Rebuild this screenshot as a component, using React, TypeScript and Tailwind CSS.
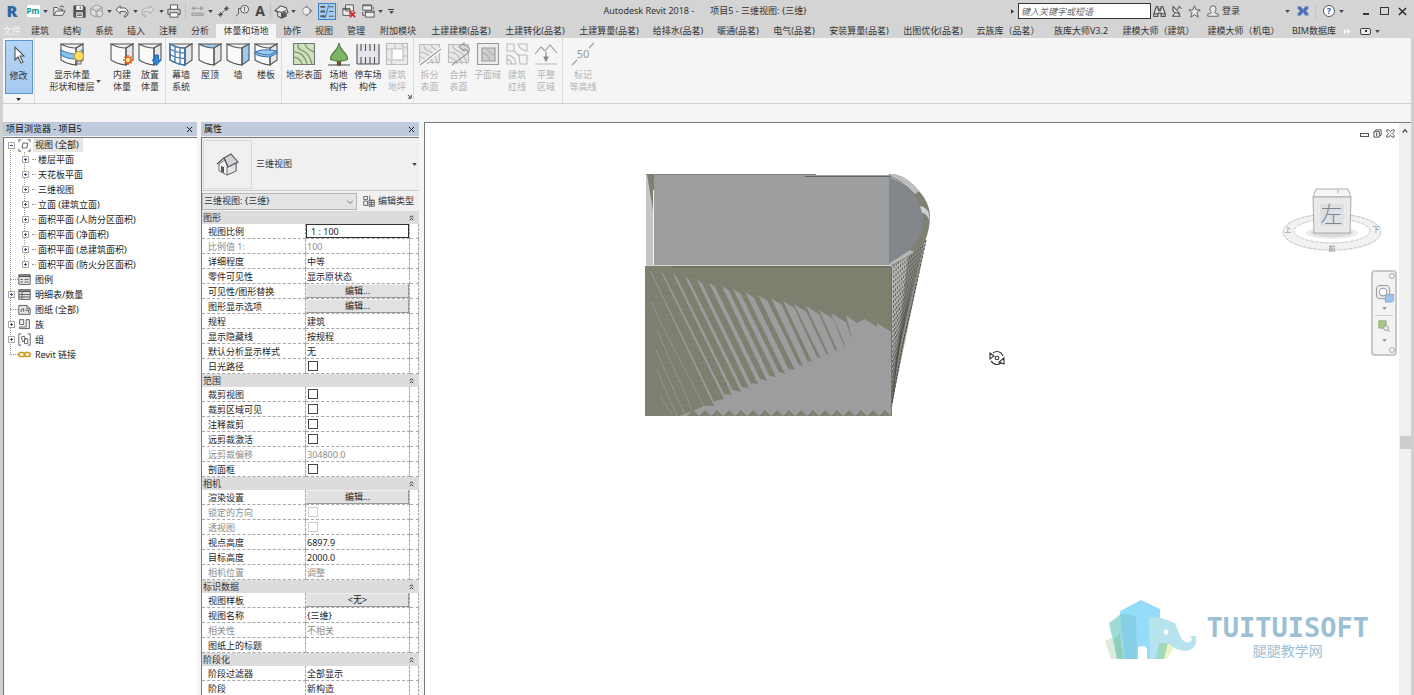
import type { ReactNode } from "react";
import clsx from "clsx";

/* ---------- shared bits ---------- */

function Caret({ className = "text-[#444]" }: { className?: string }) {
  return (
    <svg viewBox="0 0 6 4" className={clsx("h-[3px] w-[5px] shrink-0", className)} fill="currentColor">
      <path d="M0 0h6L3 4z" />
    </svg>
  );
}

function Svg({ children, box = 16, className = "size-4" }: { children: ReactNode; box?: number; className?: string }) {
  return (
    <svg
      viewBox={`0 0 ${box} ${box}`}
      className={clsx("shrink-0", className)}
      fill="none"
      stroke="#555"
      strokeWidth="1.1"
    >
      {children}
    </svg>
  );
}

/* ---------- title bar ---------- */

type Tool = { name: string; width: string; icon: ReactNode };

const HOUSE = (
  <Svg className="size-[15px]">
    <path d="M1 7l6-5 6 2 2 5-2 1v3l-5 2-4-2V8z" fill="#e8e8ec" />
    <path d="M8 15V9l5-2M1 7l4 2M5 8l3 1" />
    <path d="M9 10l3-1v4l-3 1z" fill="#555" />
  </Svg>
);

const TOOLS: (Tool | "caret" | "line")[] = [
  {
    name: "Revit",
    width: "w-6",
    icon: <span className="text-[16px] leading-4 font-black text-[#2a669f]">R</span>,
  },
  {
    name: "品茗",
    width: "w-[18px]",
    icon: <span className="w-[13px] rounded-[1px] bg-white text-[8px] leading-[12px] font-bold text-[#12948e]">Pm</span>,
  },
  "caret",
  {
    name: "打开",
    width: "w-[22px]",
    icon: (
      <Svg className="size-[14px]">
        <path d="M2 13V4h4l1.500 2H12v2M2 13l3-5h10l-3 5z" fill="#eee" />
        <path d="M9 3q3-2 5 1" />
      </Svg>
    ),
  },
  {
    name: "保存",
    width: "w-[18px]",
    icon: (
      <Svg className="size-[13px]">
        <path d="M1 1h12l2 2v12H1z" fill="#555" />
        <path d="M4 1h8v5H4zM4 9h8v6H4z" fill="#eee" stroke="none" />
        <path d="M9 2v3M5 11h6M5 13h6" />
      </Svg>
    ),
  },
  {
    name: "同步",
    width: "w-[18px]",
    icon: (
      <Svg className="size-[14px]">
        <path d="M1 5l6-4 7 3v7l-7 4-6-3zM1 5l6 3 7-4M7 8v7" stroke="#999" fill="#ddd" />
        <circle cx="11" cy="11" r="3.500" fill="#ddd" stroke="#999" />
      </Svg>
    ),
  },
  "caret",
  {
    name: "放弃",
    width: "w-5",
    icon: (
      <Svg className="size-[14px]">
        <path d="M6 2L1 6.500 6 11V8.500h5q2 0 2 2T11 13v2q4-1 4-5t-4-5.500H6z" fill="#eee" />
      </Svg>
    ),
  },
  "caret",
  {
    name: "重做",
    width: "w-5",
    icon: (
      <Svg className="size-[14px]">
        <path d="M10 2l5 4.500L10 11V8.500H5q-2 0-2 2T5 13v2q-4-1-4-5t4-5.500h5z" fill="#ddd" stroke="#aaa" />
      </Svg>
    ),
  },
  "caret",
  {
    name: "打印",
    width: "w-5",
    icon: (
      <Svg className="size-[14px]">
        <path d="M4 6V1h8v5" fill="#fff" />
        <path d="M1 6h14v6H1z" fill="#ccc" />
        <path d="M3.500 10h9v5h-9z" fill="#fff" />
      </Svg>
    ),
  },
  "line",
  {
    name: "测量",
    width: "w-5",
    icon: (
      <Svg className="size-[13px]">
        <path d="M1 4h14M1 4l3-2v4zM15 4l-3-2v4z" stroke="#999" />
        <path d="M1 10h14v3H1z" stroke="#999" fill="#bbb" />
      </Svg>
    ),
  },
  "caret",
  {
    name: "对齐尺寸标注",
    width: "w-5",
    icon: (
      <Svg className="size-[13px]">
        <path d="M3 13L13 3M1 11l4 4M11 1l4 4" />
        <path d="M3 13l1-4 3 3zM13 3l-4 1 3 3z" fill="#444" />
      </Svg>
    ),
  },
  {
    name: "按类别标记",
    width: "w-[18px]",
    icon: (
      <Svg className="size-[14px]">
        <circle cx="11" cy="6" r="4.500" fill="#eee" />
        <path d="M11 3.500v5M10 4l1-.5M7 5H4v6l-3 3" />
      </Svg>
    ),
  },
  {
    name: "文字",
    width: "w-[18px]",
    icon: <span className="text-[14px] leading-4 font-bold text-[#444]">A</span>,
  },
  "line",
  { name: "默认三维视图", width: "w-[18px]", icon: HOUSE },
  "caret",
  {
    name: "剖面",
    width: "w-[22px]",
    icon: (
      <Svg className="size-[12px]">
        <path d="M7 1l8 7-8 7z" stroke="#888" fill="#999" />
        <circle cx="7" cy="8" r="5" stroke="#888" fill="#eee" />
      </Svg>
    ),
  },
  {
    name: "细线",
    width: "w-[18px]",
    icon: (
      <Svg className="h-[17px] w-[18px] border border-[#3b83c8] bg-[#a9cdf0]">
        <path d="M1 3h5M1 8h5M1 13h5" strokeWidth="2" />
        <path d="M10 3h5M10 8h5M10 13h5" strokeWidth="1" />
        <path d="M10 1L6 15" stroke="#3b83c8" />
      </Svg>
    ),
  },
  "line",
  {
    name: "关闭隐藏窗口",
    width: "w-5",
    icon: (
      <Svg className="size-[14px]">
        <path d="M4 1h9v7H4zM1 5h8v8H1z" fill="#eee" />
        <path d="M1 6h8" />
        <path d="M9 9l6 6M15 9l-6 6" stroke="#d22" strokeWidth="2" />
      </Svg>
    ),
  },
  {
    name: "切换窗口",
    width: "w-[18px]",
    icon: (
      <Svg className="size-[14px]">
        <path d="M2 1h10v6H2zM5 8h10v7H5z" fill="#eee" />
        <path d="M2 2h10M5 9.500h10M2 9v4h2M14 3v3" />
      </Svg>
    ),
  },
  "caret",
];

function TitleBar() {
  return (
    <header className="flex h-[22px] shrink-0 items-center bg-[#d4d4d4]">
      <div className="flex items-center">
        {TOOLS.map((tool, i) => {
          if (tool === "caret") {
            return (
              <button key={i} type="button" aria-label="更多" className="flex w-[6px] justify-center">
                <Caret />
              </button>
            );
          }
          if (tool === "line") return <span key={i} className="mx-px h-4 w-px bg-[#bdbdbd]" />;
          return (
            <button key={i} type="button" aria-label={tool.name} className={clsx("flex justify-center", tool.width)}>
              {tool.icon}
            </button>
          );
        })}
        <button type="button" aria-label="自定义快速访问工具栏" className="flex w-4 flex-col items-center gap-px">
          <span className="h-px w-[6px] bg-[#333]" />
          <Caret />
        </button>
      </div>

      <h1 className="flex flex-1 justify-center gap-4 whitespace-pre">
        <span>Autodesk Revit 2018 -</span>
        <span>项目5 - 三维视图: {"{三维}"}</span>
      </h1>

      <div className="flex items-center">
        <svg viewBox="0 0 4 6" className="mr-1 h-[5px] w-[3px]" fill="#333">
          <path d="M0 0l4 3-4 3z" />
        </svg>
        <input
          aria-label="搜索"
          placeholder="键入关键字或短语"
          className="h-4 w-[133px] border border-[#333] bg-white px-[2px] placeholder:text-[#666] placeholder:italic"
        />
        <button type="button" aria-label="查找" className="flex w-[18px] justify-center">
          <Svg className="size-[13px]">
            <path d="M4 2h2v3h4V2h2l3 9v3h-5v-4H6v4H1v-3zM1 11h5M10 11h5M6 7h4" fill="#e6e6e6" strokeWidth="1.500" />
          </Svg>
        </button>
        <button type="button" aria-label="通讯中心" className="flex w-[17px] justify-center">
          <Svg className="size-[12px]">
            <path d="M3 2q-3 9 8 9zM7 7l4-4M10 1l4 4M5 11l-3 4h10l-2-4" fill="#e6e6e6" strokeWidth="1.400" />
          </Svg>
        </button>
        <button type="button" aria-label="收藏夹" className="flex w-[18px] justify-center">
          <Svg className="size-[13px]">
            <path d="M8 1l2 5h5l-4 3.500L12.500 15 8 12l-4.500 3L5 9.500 1 6h5z" fill="#e6e6e6" />
          </Svg>
        </button>
        <button type="button" className="flex items-center gap-[3px] pl-[3px]">
          <Svg className="size-[12px]">
            <path d="M8 1q4 0 4 4t-2 5q1 1.500 5 2v3H1v-3q4-.5 5-2Q4 9 4 5t4-4z" fill="#e6e6e6" />
          </Svg>
          登录
        </button>
        <button type="button" aria-label="登录选项" className="ml-[43px] flex w-2 justify-center">
          <Caret />
        </button>
        <button type="button" aria-label="Exchange" className="flex w-6 items-center justify-center">
          <Svg className="size-[12px]">
            <path d="M1 2h4l3 4 3-4h4v3l-3 3 3 3v3h-4l-3-4-3 4H1v-3l3-3-3-3z" fill="#4c6eb2" stroke="#8ea5d0" />
          </Svg>
        </button>
        <span className="h-4 w-px bg-[#c4c4c4]" />
        <button type="button" aria-label="帮助" className="ml-[5px] flex w-4 justify-center">
          <span className="size-[12px] rounded-full border border-[#555] bg-white text-[9px] leading-[10px] font-bold text-[#2c4fb0]">
            ?
          </span>
        </button>
        <button type="button" aria-label="帮助选项" className="flex w-2 justify-center">
          <Caret />
        </button>
        <button type="button" aria-label="最小化" className="ml-[12px] flex w-[18px] justify-center">
          <span className="mt-[6px] h-[2px] w-[6px] bg-[#333]" />
        </button>
        <button type="button" aria-label="最大化" className="flex w-[18px] justify-center">
          <span className="h-[8px] w-[9px] border border-[#333]" />
        </button>
        <button type="button" aria-label="关闭" className="mr-[3px] flex w-[18px] justify-center">
          <Svg box={10} className="size-[9px]">
            <path d="M1 1l8 8M9 1L1 9" stroke="#222" strokeWidth="1.500" />
          </Svg>
        </button>
      </div>
    </header>
  );
}

/* ---------- ribbon ---------- */

const TABS: [string, string][] = [
  ["建筑", "w-8"],
  ["结构", "w-8"],
  ["系统", "w-8"],
  ["插入", "w-8"],
  ["注释", "w-8"],
  ["分析", "w-8"],
  ["体量和场地", "w-[60px]"],
  ["协作", "w-8"],
  ["视图", "w-8"],
  ["管理", "w-8"],
  ["附加模块", "w-[52px]"],
  ["土建建模(品茗)", "w-[74px]"],
  ["土建转化(品茗)", "w-[74px]"],
  ["土建算量(品茗)", "w-[74px]"],
  ["给排水(品茗)", "w-16"],
  ["暖通(品茗)", "w-14"],
  ["电气(品茗)", "w-14"],
  ["安装算量(品茗)", "w-[74px]"],
  ["出图优化(品茗)", "w-[74px]"],
  ["云族库（品茗）", "w-[76px]"],
  ["族库大师V3.2", "w-[70px]"],
  ["建模大师（建筑）", "w-[85px]"],
  ["建模大师（机电）", "w-[85px]"],
  ["BIM数据库", "w-14"],
];

function Tabs() {
  return (
    <nav className="flex h-4 shrink-0 items-end overflow-hidden bg-[#d4d4d4] whitespace-nowrap">
      <button type="button" className="h-[14px] w-6 shrink-0 text-[#f4f4f4]">
        文件
      </button>
      {TABS.map(([label, width]) => (
        <button
          key={label}
          type="button"
          className={clsx("h-[14px] shrink-0", width, label === "体量和场地" && "bg-[#f5f5f5]")}
        >
          {label}
        </button>
      ))}
      <span className="mr-2 flex h-[14px] w-[10px] items-center justify-center">
        <Svg box={10} className="size-[7px]">
          <path d="M0 1l4 4-4 4zM5 1l4 4-4 4z" fill="#fff" stroke="none" />
        </Svg>
      </span>
      <button type="button" aria-label="显示面板" className="flex h-[14px] items-center gap-1">
        <span className="flex h-[7px] w-[11px] items-center justify-center rounded-[2px] border border-[#444] bg-[#eee]">
          <span className="size-[2px] bg-[#333]" />
        </span>
        <Caret />
      </button>
    </nav>
  );
}

/* curved mass block that most of the tools are drawn over */
function Mass({ top, side, children }: { top?: string; side?: string; children?: ReactNode }) {
  return (
    <Svg box={24} className="size-6">
      <path d="M1 2q7 4 15 4v17Q7 22 1 18z" fill="#fafafa" stroke="none" />
      <path d="M1 2q7 4 15 4l7-4z" fill={top ?? "#f0f0f0"} />
      <path d="M16 6l7-4v16l-7 5z" fill={side ?? "#e6e6e8"} />
      <path d="M1 2v16q6 4 15 5V6" />
      {children}
    </Svg>
  );
}

const CONTOURS = "M2 10q10 0 13 12M2 15q6 1 8 7M6 2q-1 5 5 7t9 13M13 2q0 4 9 8";

function Gray({ children }: { children: ReactNode }) {
  return (
    <Svg box={24} className="size-6">
      <g stroke="#bcbcbc">{children}</g>
    </Svg>
  );
}

type RibbonTool = { label: string[]; width: string; icon: ReactNode; off?: boolean; menu?: boolean };

const GROUPS: { pad: string; launcher?: boolean; tools: RibbonTool[] }[] = [
  {
    pad: "pl-[10px] pr-px",
    tools: [
      {
        label: ["显示体量", "形状和楼层"],
        width: "w-[54px]",
        menu: true,
        icon: (
          <Mass>
            <path d="M1 8q7 4 15 4l7-4v5l-7 4Q7 17 1 13z" fill="#8cc4ea" stroke="#3f7fb4" />
            <circle cx="19" cy="14" r="4.500" fill="#ffdf62" stroke="#d3a52c" />
            <path d="M17 19h4v3h-4z" fill="#ddd" stroke="#777" />
          </Mass>
        ),
      },
      {
        label: ["内建", "体量"],
        width: "ml-[9px] w-7",
        icon: (
          <Mass>
            <path d="M18 13v10M13 18h10M14.500 14.500l7 7M21.500 14.500l-7 7" stroke="#e8640c" strokeWidth="1.500" />
            <circle cx="18" cy="18" r="2.500" fill="#fff3c0" stroke="#e8640c" />
          </Mass>
        ),
      },
      {
        label: ["放置", "体量"],
        width: "w-7",
        icon: (
          <Mass>
            <path d="M16.500 13h4v5H23l-4.500 5.500L14 18h2.500z" fill="#2f86e0" stroke="#1b5fae" strokeWidth=".8" />
          </Mass>
        ),
      },
    ],
  },
  {
    pad: "pl-px pr-px",
    tools: [
      {
        label: ["幕墙", "系统"],
        width: "w-7",
        icon: (
          <Mass>
            <path d="M1 2q7 4 15 4v17Q7 22 1 18zM1 7q7 4 15 4M1 12.500q7 4 15 4M6 4.500V21M11 6v16.500" stroke="#3a78b0" strokeWidth="1.300" />
          </Mass>
        ),
      },
      { label: ["屋顶"], width: "ml-px w-7", icon: <Mass top="#9ccbf0" /> },
      { label: ["墙"], width: "w-7", icon: <Mass side="#9ccbf0" /> },
      {
        label: ["楼板"],
        width: "w-7",
        icon: (
          <Mass>
            <path d="M1 10q7-3 15-2l7 1v2l-7 4Q7 15 1 12z" fill="#9ccbf0" stroke="#3a78b0" />
            <path d="M1 10q7 3 15 3l7-4" stroke="#3a78b0" />
          </Mass>
        ),
      },
    ],
  },
  {
    pad: "pl-[2px] pr-px",
    launcher: true,
    tools: [
      {
        label: ["地形表面"],
        width: "w-10",
        icon: (
          <Svg box={24} className="size-6">
            <path d="M1.500 1.500h21v21h-21z" fill="#cfe0be" stroke="#777" />
            <path d={CONTOURS} stroke="#76915f" />
          </Svg>
        ),
      },
      {
        label: ["场地", "构件"],
        width: "w-[29px]",
        icon: (
          <Svg box={24} className="size-6">
            <path d="M10.500 16h3v7h-3z" fill="#8a5a30" stroke="#5c3a1c" />
            <path d="M12 1q1 5 4 8 5 5 4.500 8.500Q12 21 3.500 17.500 3 14 8 9q3-3 4-8z" fill="#7db466" stroke="#4b7a3b" />
            <path d="M1 23h22" />
          </Svg>
        ),
      },
      {
        label: ["停车场", "构件"],
        width: "w-[30px]",
        icon: (
          <Svg box={24} className="size-6">
            <path d="M1 2h22v20H1z" fill="#e3e5ea" stroke="none" />
            <path d="M1 2v20M23 2v20M5 2v7M9.500 2v7M14 2v7M18.500 2v7M5 15v7M9.500 15v7M14 15v7M18.500 15v7M1 22h22" />
          </Svg>
        ),
      },
      {
        label: ["建筑", "地坪"],
        width: "w-7",
        off: true,
        icon: (
          <Gray>
            <path d="M1.500 1.500h21v21h-21z" fill="#eaeaea" />
            <path d="M7 7h11v11H7z" fill="#fff" />
            <path d="M2 7h5M2 17q4 0 5 5M17 2q0 4 5 4M10 2v5M18 14h4" />
          </Gray>
        ),
      },
    ],
  },
  {
    pad: "pl-px pr-[2px]",
    tools: [
      {
        label: ["拆分", "表面"],
        width: "w-[29px]",
        off: true,
        icon: (
          <Gray>
            <path d="M1.500 2.500h20v18h-20z" fill="#e8e8e8" />
            <path d={CONTOURS} />
            <path d="M2 23L23 7" stroke="#fafafa" strokeWidth="4" />
            <path d="M2 23L23 7" stroke="#999" />
          </Gray>
        ),
      },
      {
        label: ["合并", "表面"],
        width: "w-[29px]",
        off: true,
        icon: (
          <Gray>
            <path d="M1.500 2.500h20v18h-20z" fill="#e8e8e8" />
            <path d={CONTOURS} />
            <path d="M5 23L21 11" stroke="#999" />
            <path d="M17 1l-5 4 5 4V7q4 0 4 4 4-6-4-8z" fill="#ddd" stroke="#999" />
          </Gray>
        ),
      },
      {
        label: ["子面域"],
        width: "w-[29px]",
        off: true,
        icon: (
          <Gray>
            <path d="M1.500 1.500h21v21h-21z" fill="#ececec" stroke="#999" />
            <path d="M6 6h13v13H6z" fill="#cfcfcf" stroke="#999" />
            <path d="M6 11q6 0 8 8M11 6q1 5 8 7" stroke="#aaa" />
          </Gray>
        ),
      },
      {
        label: ["建筑", "红线"],
        width: "w-[30px]",
        off: true,
        icon: (
          <Gray>
            <path d="M2 2h7v7H2zM13 2h9v7q-7-1-9-7zM2 13q8 1 9 9H2zM14 13h8v9h-7zM9 9l5 5M2 17q4 1 5 5" fill="#f4f4f4" />
          </Gray>
        ),
      },
      {
        label: ["平整", "区域"],
        width: "w-7",
        off: true,
        icon: (
          <Gray>
            <path d="M1 12l6-7 4 4 5-6 7 8" stroke="#999" />
            <path d="M12 10v8M10 15l2 4 2-4z" stroke="#888" fill="#888" />
            <path d="M1 22h22" />
          </Gray>
        ),
      },
    ],
  },
];

function RibbonButton({ tool }: { tool: RibbonTool }) {
  return (
    <button
      type="button"
      disabled={tool.off}
      className={clsx("flex shrink-0 flex-col items-center pt-1 leading-[12px]", tool.width, tool.off && "text-[#b4b4b4]")}
    >
      {tool.icon}
      <span className={clsx("mt-[3px] flex items-center gap-px whitespace-nowrap", tool.menu && "-mr-[6px]")}>
        <span>
          {tool.label.map((line) => (
            <span key={line} className="block">
              {line}
            </span>
          ))}
        </span>
        {tool.menu && <Caret />}
      </span>
    </button>
  );
}

function Ribbon() {
  return (
    <section className="flex h-[66px] shrink-0 border-b border-[#d0d0d0] bg-[#f5f5f5]">
      <div className="flex w-8 flex-col items-center gap-1 border-r border-[#dcdcdc] pt-[2px]">
        <button
          type="button"
          className="flex h-[54px] w-7 flex-col items-center border border-[#5b94cf] bg-linear-to-b from-[#b4d5f5] to-[#a6caee] pt-1"
        >
          <Svg box={20} className="size-5">
            <path d="M6 2v13l3-3 3 6 2-1-3-6h4z" fill="#fff" />
          </Svg>
          <span className="mt-1">修改</span>
        </button>
        <Caret className="text-[#222]" />
      </div>
      {GROUPS.map((group, i) => (
        <div key={i} className={clsx("flex shrink-0 border-r border-[#dcdcdc]", group.pad, i === 0 && "w-[131px]")}>
          {group.tools.map((tool) => (
            <RibbonButton key={tool.label.join("")} tool={tool} />
          ))}
          {group.launcher && (
            <span className="flex w-px items-end justify-end pb-1">
              <Svg box={6} className="size-[5px]">
                <path d="M1 1l4 4M5 1v4H1" stroke="#333" />
              </Svg>
            </span>
          )}
        </div>
      ))}
      <div className="flex pl-1">
        <RibbonButton
          tool={{
            label: ["标记", "等高线"],
            width: "w-8",
            off: true,
            icon: (
              <Svg box={24} className="size-6">
                <path d="M1 23l5-5M18 6l5-5" stroke="#999" />
                <text x="12" y="16" textAnchor="middle" fontSize="11" fill="#999" stroke="none">
                  50
                </text>
              </Svg>
            ),
          }}
        />
      </div>
    </section>
  );
}

/* ---------- project browser ---------- */

function PanelTitle({ children }: { children: ReactNode }) {
  return (
    <div className="flex h-[14px] shrink-0 items-center justify-between bg-[#bfcbdd] pr-1 pl-[3px] text-[#111]">
      <h2>{children}</h2>
      <button type="button" aria-label="关闭面板">
        <Svg box={8} className="size-[7px]">
          <path d="M1 1l6 6M7 1L1 7" stroke="#111" />
        </Svg>
      </button>
    </div>
  );
}

function Expander({ open, label }: { open?: boolean; label: string }) {
  return (
    <button type="button" aria-label={label} aria-expanded={!!open} className="relative bg-white">
      <Svg box={7} className="size-[7px]">
        <path d="M.5.5h6v6h-6z" stroke="#a4a4a4" strokeWidth="1" fill="#fff" />
        <path d={open ? "M2 3.500h3" : "M2 3.500h3M3.500 2v3"} stroke="#334d8a" strokeWidth="1" />
      </Svg>
    </button>
  );
}

const VIEWS = [
  "楼层平面",
  "天花板平面",
  "三维视图",
  "立面 (建筑立面)",
  "面积平面 (人防分区面积)",
  "面积平面 (净面积)",
  "面积平面 (总建筑面积)",
  "面积平面 (防火分区面积)",
];

const NODES: { label: string; expand?: boolean; icon: ReactNode }[] = [
  {
    label: "图例",
    icon: (
      <>
        <path d="M1 2h14v12H1z" fill="#e4e6ec" />
        <path d="M1 4h14" strokeWidth="2" />
        <path d="M3 8h3M3 11h3M8 8h5M8 11h5" />
      </>
    ),
  },
  {
    label: "明细表/数量",
    expand: true,
    icon: (
      <>
        <path d="M1 2h14v12H1zM1 8h14M1 11h14M5 5v9" fill="#e4e6ec" />
        <path d="M1 4h14" strokeWidth="2" />
      </>
    ),
  },
  { label: "图纸 (全部)", icon: <path d="M1 3h10l4 4v7H1zM11 3v4h4M4 11V8l3-1v4M9 9h4v3" fill="#e4e6ec" /> },
  { label: "族", expand: true, icon: <path d="M2 2h5v6H2zM10 2h4v11H2v-2h8z" fill="#f0f0f4" /> },
  { label: "组", expand: true, icon: <path d="M4 1H1v14h3M12 1h3v14h-3M4 5l4-1 1 4-3 3zM8 7h4v6H8z" /> },
  {
    label: "Revit 链接",
    icon: (
      <>
        <rect x="1" y="5.500" width="7" height="5" rx="2.500" stroke="#d39a1c" strokeWidth="2" />
        <rect x="8" y="5.500" width="7" height="5" rx="2.500" stroke="#d39a1c" strokeWidth="2" />
      </>
    ),
  },
];

function Browser() {
  return (
    <aside className="flex w-[194px] shrink-0 flex-col bg-[#f5f5f5]">
      <PanelTitle>项目浏览器 - 项目5</PanelTitle>
      <div className="mt-px flex-1 overflow-hidden border-t border-l border-[#777] bg-white">
        <ul className="relative whitespace-nowrap text-[#222]">
          <li className="absolute top-[10px] bottom-[7px] left-[6px] border-l border-dotted border-[#999]" aria-hidden="true" />
          <li>
            <div className="flex h-[14px] items-center">
              <span className="flex w-[14px] justify-center">
                <Expander open label="视图 (全部)" />
              </span>
              <Svg className="mr-[2px] size-[13px]">
                <path d="M4 1H1v3M12 1h3v3M4 15H1v-3M12 15h3v-3M6 5h6l-1 6H5z" />
              </Svg>
              <span className="bg-[#e6e6e6] pr-1 pl-[2px]">视图 (全部)</span>
            </div>
            <ul className="relative">
              <li className="absolute top-0 bottom-[7px] left-[20px] border-l border-dotted border-[#999]" aria-hidden="true" />
              {VIEWS.map((view) => (
                <li key={view} className="flex h-[15px] items-center pl-[14px]">
                  <span className="flex w-[14px] justify-center">
                    <Expander label={view} />
                  </span>
                  <span className="mr-[2px] w-1 border-t border-dotted border-[#999]" />
                  {view}
                </li>
              ))}
            </ul>
          </li>
          {NODES.map((node) => (
            <li key={node.label} className="flex h-[15px] items-center">
              <span className="flex w-[14px] justify-center">
                {node.expand ? (
                  <Expander label={node.label} />
                ) : (
                  <span className="ml-[6px] w-2 border-t border-dotted border-[#999]" />
                )}
              </span>
              <Svg className="mr-1 size-[13px]">{node.icon}</Svg>
              {node.label}
            </li>
          ))}
        </ul>
      </div>
    </aside>
  );
}

/* ---------- properties ---------- */

type Prop = { name: string; value?: string; kind?: "edit" | "button" | "check"; off?: boolean };

const SECTIONS: { title: string; rows: Prop[] }[] = [
  {
    title: "图形",
    rows: [
      { name: "视图比例", value: "1 : 100", kind: "edit" },
      { name: "比例值 1:", value: "100", off: true },
      { name: "详细程度", value: "中等" },
      { name: "零件可见性", value: "显示原状态" },
      { name: "可见性/图形替换", value: "编辑...", kind: "button" },
      { name: "图形显示选项", value: "编辑...", kind: "button" },
      { name: "规程", value: "建筑" },
      { name: "显示隐藏线", value: "按规程" },
      { name: "默认分析显示样式", value: "无" },
      { name: "日光路径", kind: "check" },
    ],
  },
  {
    title: "范围",
    rows: [
      { name: "裁剪视图", kind: "check" },
      { name: "裁剪区域可见", kind: "check" },
      { name: "注释裁剪", kind: "check" },
      { name: "远剪裁激活", kind: "check" },
      { name: "远剪裁偏移", value: "304800.0", off: true },
      { name: "剖面框", kind: "check" },
    ],
  },
  {
    title: "相机",
    rows: [
      { name: "渲染设置", value: "编辑...", kind: "button" },
      { name: "锁定的方向", kind: "check", off: true },
      { name: "透视图", kind: "check", off: true },
      { name: "视点高度", value: "6897.9" },
      { name: "目标高度", value: "2000.0" },
      { name: "相机位置", value: "调整", off: true },
    ],
  },
  {
    title: "标识数据",
    rows: [
      { name: "视图样板", value: "<无>", kind: "button" },
      { name: "视图名称", value: "{三维}" },
      { name: "相关性", value: "不相关", off: true },
      { name: "图纸上的标题" },
    ],
  },
  {
    title: "阶段化",
    rows: [
      { name: "阶段过滤器", value: "全部显示" },
      { name: "阶段", value: "新构造" },
    ],
  },
];

function PropValue({ row }: { row: Prop }) {
  if (row.kind === "edit") {
    return (
      <input
        id={row.name}
        defaultValue={row.value}
        className="block h-[14px] w-full border border-[#333] bg-white px-1 leading-[12px]"
      />
    );
  }
  if (row.kind === "button") {
    return (
      <button
        id={row.name}
        type="button"
        className="block h-[14px] w-full border border-t-[#eee] border-r-[#999] border-b-[#999] border-l-[#eee] bg-[#e1e1e1] leading-[12px]"
      >
        {row.value}
      </button>
    );
  }
  if (row.kind === "check") {
    return (
      <input
        id={row.name}
        type="checkbox"
        disabled={row.off}
        className="ml-[2px] block size-[10px] appearance-none border border-[#444] bg-white disabled:border-[#d0d0d0]"
      />
    );
  }
  return <span className="block pl-px">{row.value}</span>;
}

function Properties() {
  const cell = "h-[15px] overflow-hidden border-r border-b border-dashed border-[#a8a8a8] p-0 align-middle";
  return (
    <aside className="ml-1 flex w-[218px] shrink-0 flex-col bg-[#f0f0f0]">
      <PanelTitle>属性</PanelTitle>
      <div className="mt-px flex flex-1 flex-col overflow-hidden border-t border-l border-[#777]">
        <button type="button" className="flex h-[53px] shrink-0 items-center border-b border-[#ccc] pr-[2px] pl-px">
          <span className="flex size-[49px] items-center justify-center border border-[#d8d8d8]">
            <Svg box={24} className="size-6">
              <path d="M3 12v7l8 4 9-4v-8l-5-7z" fill="#f4f4f6" strokeWidth=".8" />
              <path d="M11 15v8l9-4v-8z" fill="#e2e4e8" strokeWidth=".8" />
              <path d="M8 6l7-4 7 8-10 5z" fill="#d0d3da" />
              <path d="M1 12l7-6 4 9" />
              <path d="M5 14l3 1v6l-3-1.500z" fill="#555" stroke="none" />
            </Svg>
          </span>
          <span className="ml-1 flex-1 text-left">三维视图</span>
          <Caret />
        </button>
        <div className="flex h-5 shrink-0 items-center gap-[6px]">
          <div className="relative h-[17px] w-[155px]">
            <select
              aria-label="视图"
              className="h-full w-full appearance-none border border-[#b5b5b5] bg-[#e4e4e4] pl-px leading-[14px]"
            >
              <option>三维视图: {"{三维}"}</option>
            </select>
            <Svg box={8} className="pointer-events-none absolute top-[6px] right-1 size-[6px]">
              <path d="M0 2l4 4 4-4" stroke="#666" />
            </Svg>
          </div>
          <button type="button" className="flex items-center gap-[3px]">
            <Svg className="size-3">
              <path d="M1 2h5v4H1zM1 8h5v6H1zM9 1v6h6M8 7h7v8H8zM8 10h7M8 12.500h7M11 7v8" />
            </Svg>
            编辑类型
          </button>
        </div>
        <table className="w-full table-fixed border-separate border-spacing-0 bg-white leading-[13px] whitespace-nowrap">
          <colgroup>
            <col className="w-[104px]" />
            <col className="w-[104px]" />
            <col />
          </colgroup>
          {SECTIONS.map((section) => (
            <tbody key={section.title}>
              <tr>
                <th colSpan={3} className="h-[13px] bg-[#dcdcdc] p-0 pr-1 pl-px text-left font-normal">
                  <div className="flex h-[13px] items-center justify-between">
                    {section.title}
                    <button type="button" aria-label={`折叠${section.title}`}>
                      <Svg box={8} className="size-[7px]">
                        <path d="M2 4l2-2 2 2M2 7l2-2 2 2" stroke="#222" />
                      </Svg>
                    </button>
                  </div>
                </th>
              </tr>
              {section.rows.map((row) => (
                <tr key={row.name} className={row.off ? "text-[#8c8c8c]" : "text-[#1c1c1c]"}>
                  <td className={cell}>
                    <label htmlFor={row.kind && row.name} className="block pl-[6px]">
                      {row.name}
                    </label>
                  </td>
                  <td className={cell}>
                    <PropValue row={row} />
                  </td>
                  <td className={cell} />
                </tr>
              ))}
            </tbody>
          ))}
        </table>
      </div>
    </aside>
  );
}

/* ---------- 3D view ---------- */

/* sunlit slits on the front wall: top point and foot of each one */
const TOPS = [
  [10, 101], [21, 102], [33, 104], [45, 107], [57, 110], [69, 113], [82, 116], [93, 119], [105, 122],
  [118, 125], [131, 128], [143, 131], [154, 134], [166, 136], [179, 140], [191, 143],
];
const FEET = [
  [74, 236], [84, 229], [92, 225], [101, 222], [109, 218], [118, 214], [127, 211], [136, 207], [145, 204],
  [155, 200], [163, 196], [172, 192], [181, 189], [189, 185], [198, 182], [204, 172],
];

function slit(i: number) {
  const [tx, ty] = TOPS[i];
  const [fx, fy] = FEET[i];
  const w = 0.8 + i * 0.64;
  const foot = w * 0.75;
  return `${tx},${ty} ${tx + w + w * 0.45},${ty + w * 0.9} ${fx + foot},${fy - 3} ${fx + foot},${fy + 4} ${fx},${fy}`;
}

const LIT = [
  "40,246",
  "64,236",
  ...FEET.map(([x, y], i) => `${x},${y} ${x + (0.8 + i * 0.64) * 0.75},${y - 5}`),
  "206,145 217,153 225,149 237,157 237,153 248,160 251,162 251,246",
].join(" ");

const TEETH = Array.from({ length: 17 }, (_, i) => `M${47 + i * 12} 246l6-6 6 6z`).join("");
const COURSES = Array.from({ length: 24 }, (_, i) => {
  const y = 100 + i * 6;
  const seams = Array.from({ length: 10 }, (_, j) => `M${12 + j * 25 + (i % 2) * 12} ${y}v6`).join("");
  return `M6 ${y}h245${seams}`;
}).join("");
/* block joints of the curved wall, seen almost edge on */
const RIBS = Array.from({ length: 14 }, (_, i) => `M${254 + i * 2.3} ${95 - i * 1.9}L${252 + i * 0.4} ${236 - i * 4}`).join("");

function Model() {
  return (
    <svg viewBox="0 0 300 255" className="absolute top-[47px] left-[215px] h-[255px] w-[300px]">
      {/* inside of the room */}
      <path d="M6 4h8v92H6z" fill="#c4c6c3" />
      <path d="M7 4h8l-2 37z" fill="#7f8071" />
      <path d="M14 5h236v91H14z" fill="#9c9ea0" />
      <path d="M13.500 20v76" stroke="#f0f0ee" />
      <path d="M6 4.500h170" stroke="#80816f" />
      <path d="M165 6.500h85" stroke="#555" strokeWidth=".8" />
      {/* outside of the curved wall */}
      <path d="M251 96l35-32-1 12-33 158z" fill="#b9bab8" />
      <path d="M268 84l17-14-33 164 4-40z" fill="#8c8d87" />
      <path d={RIBS} stroke="#4c4d46" strokeWidth=".8" strokeDasharray="3 2" />
      <path d="M286 70l-13 60-11 47-10 57" stroke="#46473f" fill="none" strokeDasharray="3 1" />
      {/* curved rim */}
      <path d="M249 4h5q15 4 25 17 10 11 11 24 0 14-5 26-12 15-35 26z" fill="#7e8072" />
      <path d="M250 4h5q15 4 24 17l-5 4-24-18z" fill="#bcbebe" />
      <path d="M249 7q17 7 26 18 8 12 8 27 0 13-9 23-9 10-25 19z" fill="#83868b" />
      <path d="M280 36q7 1 9 8l1 8q-3-9-8-9z" fill="#cfd1d1" />
      <path d="M270 80q-12 8-20 13v3q14-7 24-14z" fill="#b5b7b6" />
      <path d="M250 6q15 7 26 20" stroke="#333" strokeWidth=".7" strokeDasharray="2 1" fill="none" />
      {/* front wall */}
      <path d="M5 96h246v150H5z" fill="#7f806f" />
      <path d={COURSES} stroke="#73746480" strokeWidth=".5" fill="none" />
      {TOPS.map((_, i) => (
        <polygon key={i} points={slit(i)} fill="#9b9d9f" />
      ))}
      <polygon points={LIT} fill="#9b9d9f" />
      <path
        d="M11 132l20 41 33 63M17 160l36 82M16 180l29 65M17 200l20 46M20 226l12 18"
        stroke="#9b9d9f"
        strokeWidth=".7"
        fill="none"
      />
      <path d={TEETH} fill="#7f806f" />
      <path d="M6 95.500h245" stroke="#d4d5d1" />
      <path d="M32 97h218" stroke="#55564c" strokeWidth=".6" />
      <path d="M251.500 97v149" stroke="#555" strokeWidth=".8" />
    </svg>
  );
}

function ViewCube() {
  return (
    <svg viewBox="1278 185 110 70" className="absolute top-[62px] right-[11px] h-[70px] w-[110px]">
      <ellipse cx="1332" cy="232" rx="44" ry="14" fill="none" stroke="#f2f2f2" strokeWidth="10" />
      <ellipse cx="1332" cy="232" rx="49" ry="18" fill="none" stroke="#bbb" strokeDasharray="4 1" strokeWidth=".8" />
      <ellipse cx="1332" cy="231" rx="38" ry="12" fill="#fff" stroke="#bbb" strokeDasharray="4 1" strokeWidth=".8" />
      <ellipse cx="1332" cy="233" rx="26" ry="6" fill="#ececec" />
      <ellipse cx="1332" cy="233" rx="21" ry="4" fill="#dadada" />
      <path d="M1313 197l3-8h32l3 8z" fill="#f6f6f6" stroke="#999" strokeWidth=".8" />
      <path d="M1313 197h38l-1 36h-36z" fill="#e9e9ea" stroke="#999" strokeWidth=".8" />
      <path d="M1320 204h24v22h-24z" fill="#dde1e4" />
      <path d="M1338 190v3" stroke="#888" strokeWidth=".7" />
      <text x="1331.500" y="222" textAnchor="middle" fontSize="22" fontWeight="300" fill="#7d868c">
        左
      </text>
      <g fontSize="7" fill="#888" textAnchor="middle">
        <text x="1332" y="251">前</text>
        <text x="1288" y="232">上</text>
        <text x="1376" y="232">下</text>
      </g>
    </svg>
  );
}

function NavBar() {
  return (
    <div className="absolute top-[147px] right-[2px] flex h-[86px] w-[26px] flex-col items-center justify-between rounded-[4px] border-2 border-[#c8c8c8] bg-[#f3f3f3] py-px">
      <button type="button" aria-label="关闭导航栏" className="size-[6px] self-end rounded-full border border-[#aaa]" />
      <button type="button" aria-label="导航控制盘" className="flex flex-col items-center gap-1">
        <Svg box={20} className="size-[19px]">
          <rect x="1.500" y="1.500" width="14" height="14" rx="4" stroke="#999" fill="#eee" />
          <circle cx="8.500" cy="8.500" r="4" stroke="#999" fill="#fff" />
          <path d="M11 13l2-2h7v6l-2 2h-7z" fill="#9cc4ee" stroke="#6f9fd4" strokeWidth=".8" />
        </Svg>
        <Caret className="text-[#999]" />
      </button>
      <span className="h-px w-[18px] bg-[#d0d0d0]" />
      <button type="button" aria-label="区域放大" className="flex flex-col items-center gap-[6px]">
        <Svg className="size-[13px]">
          <path d="M1 1h9v9H1z" fill="#a7c78c" stroke="#86a86c" />
          <circle cx="10" cy="10" r="3" fill="#eee" stroke="#999" />
          <path d="M12 12l3 3" stroke="#999" />
        </Svg>
        <Caret className="text-[#999]" />
      </button>
      <button type="button" aria-label="导航栏选项" className="size-[6px] self-end rounded-full border border-[#aaa]" />
    </div>
  );
}

function Watermark() {
  return (
    <div className="absolute right-[30px] bottom-[35px] flex items-end gap-2">
      <svg viewBox="0 0 93 60" className="h-[60px] w-[93px]">
        <path d="M0 41l16-8 8 26H6z" fill="#dcebdc" />
        <path d="M4 23l12-9 17 4v41H12z" fill="#9fdcd8" />
        <path d="M9 38l6-5 3 26H12z" fill="#8fcfb9" />
        <path d="M15 11L36 0l19 9v50H42V50q0-4-5-4t-5 4v9H19z" fill="#95dcf8" />
        <path d="M15 14q8-1 16 3l1 42H20z" fill="#7cc6dc" fillOpacity=".6" />
        <path d="M54 42l17 3-9 14h-8z" fill="#edf2c8" />
        <path d="M54 42l9 1-4 16h-6z" fill="#a5d8b4" />
        <path d="M44 17l12 1 14 5q3 8 6 15 3 5 8 4 4-1 2-5l-1-1h6q2 13-10 15-9 0-17-7l-10-2-4 17h-5z" fill="#b7e3ee" />
        <circle cx="61" cy="32" r="2.500" fill="#fff" />
      </svg>
      <div className="flex flex-col items-center text-[#9bc0d4]">
        <span className="font-['DejaVu_Sans_Mono',monospace] text-[27px] leading-[28px] font-bold">TUITUISOFT</span>
        <span className="text-[14px] leading-[18px]">腿腿教学网</span>
      </div>
    </div>
  );
}

function Viewport() {
  return (
    <main className="relative min-w-0 flex-1 overflow-hidden bg-white">
      <Model />
      <div className="absolute top-[6px] right-1 flex items-center gap-1">
        <button type="button" aria-label="最小化视图" className="mt-[3px] h-[4px] w-[9px] border border-[#555]" />
        <button type="button" aria-label="还原视图">
          <Svg box={10} className="size-[9px]">
            <path d="M1 3h6v6H1zM3 3V1h6v6H7M4 4v4" />
          </Svg>
        </button>
        <button type="button" aria-label="关闭视图">
          <Svg box={10} className="size-[9px]">
            <path d="M1 1h2l2 2 2-2h2v2L7 5l2 2v2H7L5 7 3 9H1V7l2-2-2-2z" />
          </Svg>
        </button>
      </div>
      <ViewCube />
      <NavBar />
      {/* orbit cursor */}
      <Svg box={16} className="absolute top-[227px] left-[564px] size-4">
        <path d="M4 3q4-3 8 0l2 3M12 13q-4 3-8 0l-2-2M1 3v6l4-3zM15 8v6l-5-2z" stroke="#333" />
        <circle cx="8" cy="8" r="1.800" stroke="#333" />
      </Svg>
      <Watermark />
    </main>
  );
}

export default function App() {
  return (
    <div className="flex h-screen flex-col overflow-hidden bg-[#f5f5f5] font-['Noto_Sans','Noto_Sans_CJK_SC',sans-serif] text-[9px] leading-[14px] text-[#333]">
      <TitleBar />
      <Tabs />
      <div className="flex min-h-0 flex-1 flex-col border-r-[3px] border-l-[3px] border-[#d0d0d0]">
        <Ribbon />
        <div className="h-[18px] shrink-0" />
        <div className="flex min-h-0 flex-1">
          <Browser />
          <Properties />
          <div className="ml-[5px] flex min-w-0 flex-1 border-t border-l border-[#777]">
            <Viewport />
            <div className="flex w-3 shrink-0 flex-col items-center bg-[#f0f0f0] pt-[5px]">
              <Svg box={8} className="size-[6px]">
                <path d="M1 6l3-4 3 4" strokeWidth="1.800" />
              </Svg>
              <span className="mt-[302px] h-[13px] w-[11px] bg-[#cdcdcd]" />
            </div>
          </div>
        </div>
      </div>
    </div>
  );
}
